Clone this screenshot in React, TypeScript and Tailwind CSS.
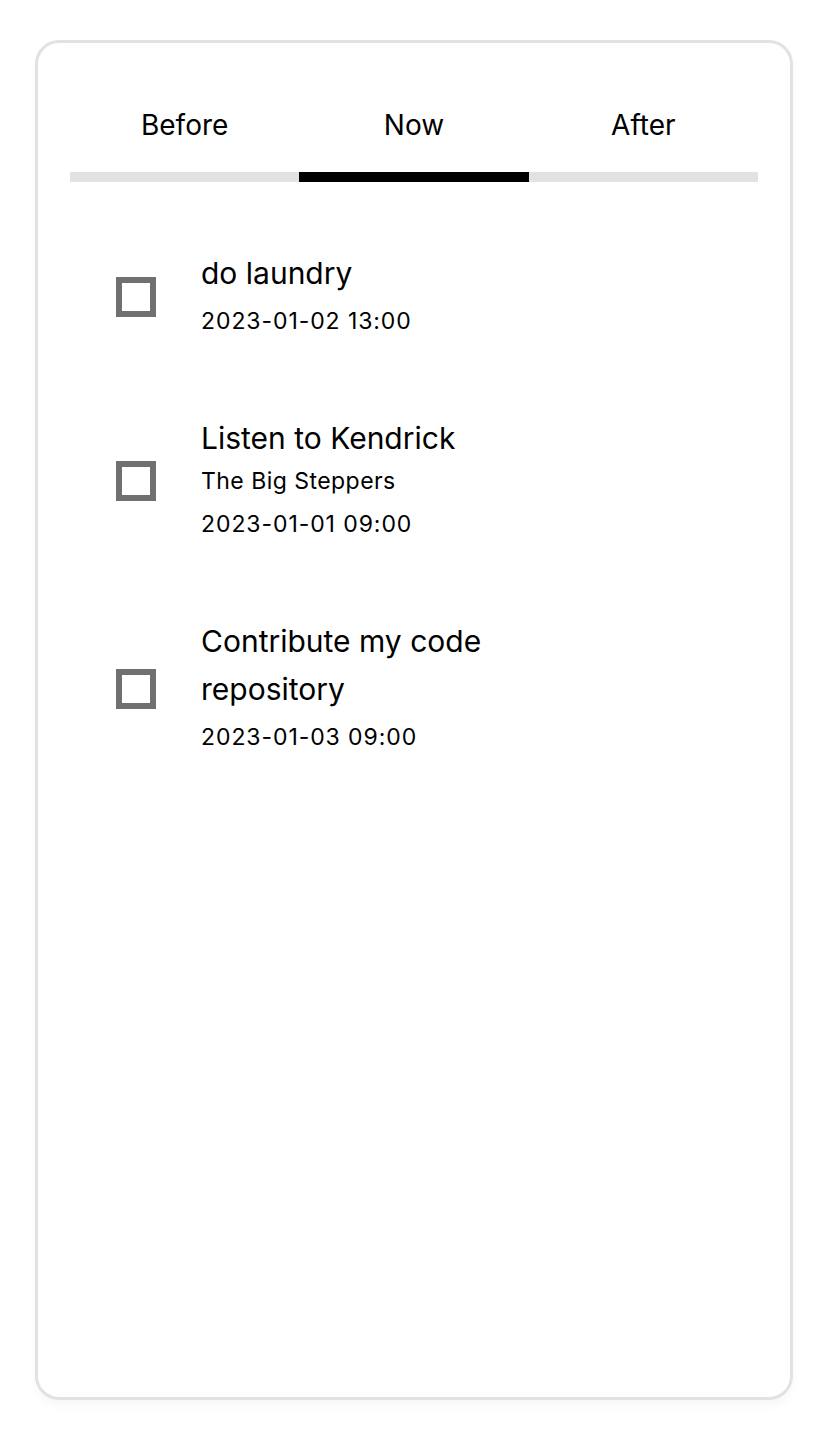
import { useState } from "react";

type Todo = {
  title: string;
  note?: string;
  due: string;
};

const todos: Todo[] = [
  { title: "do laundry", due: "2023-01-02 13:00" },
  { title: "Listen to Kendrick", note: "The Big Steppers", due: "2023-01-01 09:00" },
  { title: "Contribute my code repository", due: "2023-01-03 09:00" }
];

const tabs = ["Before", "Now", "After"];

export default function App() {
  const [active, setActive] = useState(1);
  const [done, setDone] = useState<boolean[]>([false, false, false]);

  return (
    <div className="min-h-screen bg-white pt-[40px] font-['Inter',sans-serif] text-black">
      <div className="mx-auto flex h-[1360px] w-[758px] flex-col rounded-[24px] border-[3px] border-[#e2e2e2] bg-white px-[32px] pt-[33px] shadow-[0_6px_8px_rgba(0,0,0,0.03)]">
        <div className="flex">
          {tabs.map((tab, i) => (
            <button
              key={tab}
              onClick={() => setActive(i)}
              className={`flex h-[106px] flex-1 items-center justify-center border-b-[10px] pt-[2px] text-[28px] ${
                i === active ? "border-black" : "border-[#e2e2e2]"
              }`}
            >
              {tab}
            </button>
          ))}
        </div>

        <div className="flex flex-col gap-[74px] pt-[67px]">
          {todos.map((todo, i) => (
            <TodoRow
              key={todo.title}
              todo={todo}
              checked={done[i]}
              onToggle={() =>
                setDone((d) => d.map((v, j) => (j === i ? !v : v)))
              }
            />
          ))}
        </div>
      </div>
    </div>
  );
}

interface TodoRowProps {
  todo: Todo;
  checked: boolean;
  onToggle: () => void;
}

const TodoRow = ({ todo, checked, onToggle }: TodoRowProps) => {
  return (
    <div className="flex items-center pl-[46px]">
      <button
        onClick={onToggle}
        className={`mt-[4px] h-[40px] w-[40px] shrink-0 border-[6px] border-[#707070] ${
          checked ? "bg-[#707070]" : "bg-white"
        }`}
      />
      <div className="ml-[45px] flex w-[320px] flex-col">
        <p className="text-[30px] leading-[48px]">{todo.title}</p>
        {todo.note && (
          <p className="text-[23px] leading-[38px] tracking-[0.02em]">{todo.note}</p>
        )}
        <p className="mt-[5px] text-[23px] leading-[38px] tracking-[0.04em]">
          {todo.due}
        </p>
      </div>
    </div>
  );
};
